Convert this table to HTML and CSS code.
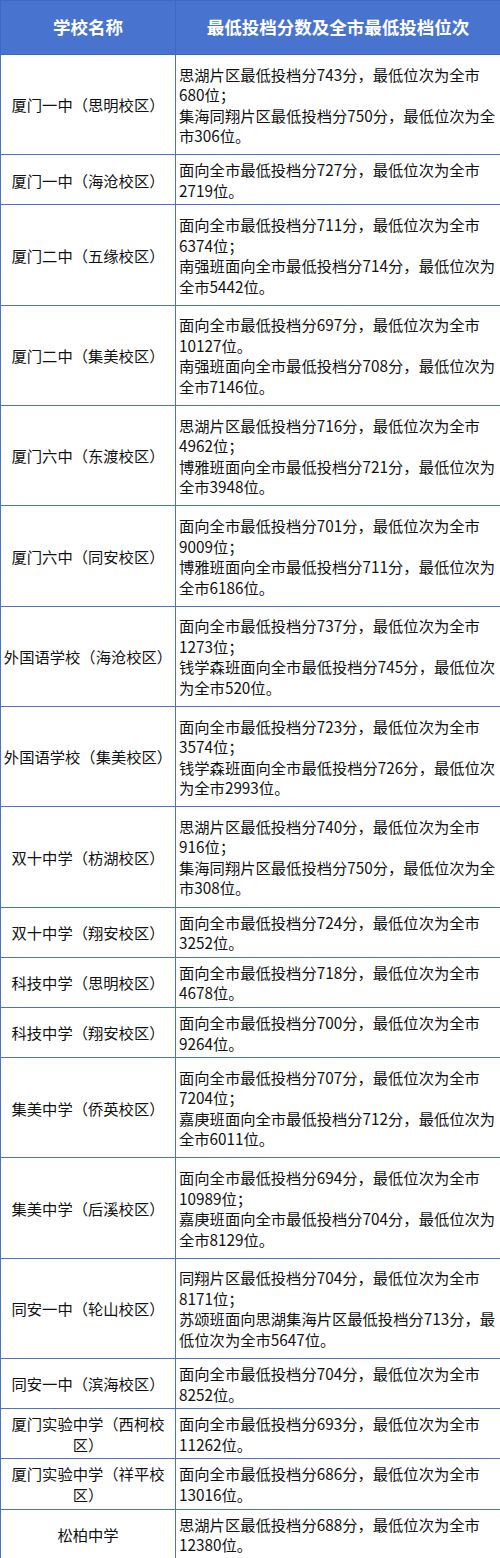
FILE: index.html
```html
<!DOCTYPE html>
<html lang="zh-CN">
<head>
<meta charset="utf-8">
<title>厦门各校最低投档分</title>
<link rel="stylesheet" href="styles.css">
</head>
<body>
<table class="scores">
  <colgroup><col class="c-name"><col class="c-info"></colgroup>
  <thead>
    <tr class="head"><th>学校名称</th><th>最低投档分数及全市最低投档位次</th></tr>
  </thead>
  <tbody>
    <tr class="r4"><td class="name">厦门一中（思明校区）</td><td class="info">思湖片区最低投档分743分，最低位次为全市680位；<br>集海同翔片区最低投档分750分，最低位次为全市306位。</td></tr>
    <tr class="r2"><td class="name">厦门一中（海沧校区）</td><td class="info">面向全市最低投档分727分，最低位次为全市2719位。</td></tr>
    <tr class="r4"><td class="name">厦门二中（五缘校区）</td><td class="info">面向全市最低投档分711分，最低位次为全市6374位；<br>南强班面向全市最低投档分714分，最低位次为全市5442位。</td></tr>
    <tr class="r4"><td class="name">厦门二中（集美校区）</td><td class="info">面向全市最低投档分697分，最低位次为全市10127位。<br>南强班面向全市最低投档分708分，最低位次为全市7146位。</td></tr>
    <tr class="r4"><td class="name">厦门六中（东渡校区）</td><td class="info">思湖片区最低投档分716分，最低位次为全市4962位；<br>博雅班面向全市最低投档分721分，最低位次为全市3948位。</td></tr>
    <tr class="r4"><td class="name">厦门六中（同安校区）</td><td class="info">面向全市最低投档分701分，最低位次为全市9009位；<br>博雅班面向全市最低投档分711分，最低位次为全市6186位。</td></tr>
    <tr class="r4"><td class="name">外国语学校（海沧校区）</td><td class="info">面向全市最低投档分737分，最低位次为全市1273位；<br>钱学森班面向全市最低投档分745分，最低位次为全市520位。</td></tr>
    <tr class="r4"><td class="name">外国语学校（集美校区）</td><td class="info">面向全市最低投档分723分，最低位次为全市3574位；<br>钱学森班面向全市最低投档分726分，最低位次为全市2993位。</td></tr>
    <tr class="r4"><td class="name">双十中学（枋湖校区）</td><td class="info">思湖片区最低投档分740分，最低位次为全市916位；<br>集海同翔片区最低投档分750分，最低位次为全市308位。</td></tr>
    <tr class="r2"><td class="name">双十中学（翔安校区）</td><td class="info">面向全市最低投档分724分，最低位次为全市3252位。</td></tr>
    <tr class="r2"><td class="name">科技中学（思明校区）</td><td class="info">面向全市最低投档分718分，最低位次为全市4678位。</td></tr>
    <tr class="r2"><td class="name">科技中学（翔安校区）</td><td class="info">面向全市最低投档分700分，最低位次为全市9264位。</td></tr>
    <tr class="r4"><td class="name">集美中学（侨英校区）</td><td class="info">面向全市最低投档分707分，最低位次为全市7204位；<br>嘉庚班面向全市最低投档分712分，最低位次为全市6011位。</td></tr>
    <tr class="r4"><td class="name">集美中学（后溪校区）</td><td class="info">面向全市最低投档分694分，最低位次为全市10989位；<br>嘉庚班面向全市最低投档分704分，最低位次为全市8129位。</td></tr>
    <tr class="r4"><td class="name">同安一中（轮山校区）</td><td class="info">同翔片区最低投档分704分，最低位次为全市8171位；<br>苏颂班面向思湖集海片区最低投档分713分，最低位次为全市5647位。</td></tr>
    <tr class="r2"><td class="name">同安一中（滨海校区）</td><td class="info">面向全市最低投档分704分，最低位次为全市8252位。</td></tr>
    <tr class="r2"><td class="name">厦门实验中学（西柯校区）</td><td class="info">面向全市最低投档分693分，最低位次为全市11262位。</td></tr>
    <tr class="r2"><td class="name">厦门实验中学（祥平校区）</td><td class="info">面向全市最低投档分686分，最低位次为全市13016位。</td></tr>
    <tr class="r2"><td class="name">松柏中学</td><td class="info">思湖片区最低投档分688分，最低位次为全市12380位。</td></tr>
  </tbody>
</table>
</body>
</html>
```
FILE: styles.css
```css
html, body {
  margin: 0;
  padding: 0;
  background: #ffffff;
}
.scores {
  width: 500px;
  table-layout: fixed;
  border-collapse: collapse;
  border: 1px solid #4470c8;
  font-family: "Noto Sans CJK SC", "Noto Sans", sans-serif;
  font-size: 15.3px;
  line-height: 20.5px;
  color: #111111;
}
.c-name { width: 175px; }
.c-info { width: 325px; }
.scores th,
.scores td {
  border: 1px solid #4a72c6;
  vertical-align: middle;
}
.head th {
  height: 53px;
  padding: 0;
  background: #4874d0;
  color: #ffffff;
  font-size: 17.5px;
  font-weight: 700;
  text-align: center;
  border-color: #3d68c4;
}
.name {
  text-align: center;
  padding: 0 1px;
}
.info {
  text-align: left;
  padding: 0 0 0 3px;
}
.r4 td { height: 99.3px; }
.r2 td { height: 49.2px; }
```
